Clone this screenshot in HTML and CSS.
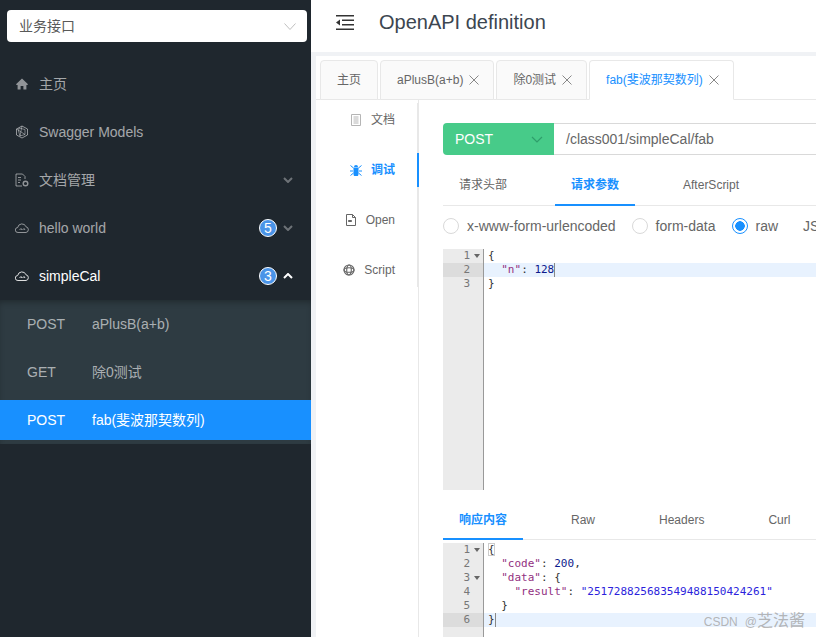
FILE: index.html
```html
<!DOCTYPE html>
<html lang="zh">
<head>
    <meta charset="UTF-8">
    <meta name="viewport" content="width=device-width, initial-scale=1.0">
    <title>OpenAPI definition</title>
    <link rel="stylesheet" href="styles.css">
</head>
<body>
    <aside class="sidebar">
        <div class="group-select">
            <span>业务接口</span>
            <svg class="select-arrow" viewBox="0 0 12 7"><path d="M.5.5 6 6.500 11.500.5" fill="none" stroke="#bfbfbf"/></svg>
        </div>
        <nav class="menu">
            <div class="menu-item">
                <svg class="menu-icon" viewBox="0 0 14 14"><path d="M7 1.500 1 7.300l.6.7h1v4.500h3V9h2.800v3.500h3V8h1l.6-.7z" fill="currentColor"/></svg>
                <span class="menu-label">主页</span>
            </div>
            <div class="menu-item">
                <svg class="menu-icon" viewBox="0 0 14 14" fill="none" stroke="currentColor"><path d="M7 1 12.500 4v6L7 13 1.500 10V4z"/><path d="M4 3 10 4.500v5L5 11 3.500 6z" stroke-width=".8"/><path d="M1.500 4 10 9.500M7 1 5 11" stroke-width=".8"/></svg>
                <span class="menu-label">Swagger Models</span>
            </div>
            <div class="menu-item">
                <svg class="menu-icon" viewBox="0 0 14 14" fill="none" stroke="currentColor"><path d="M7 13H1V1h6.500L10 3.500V6"/><path d="M3 4.500h3M3 7h3M3 9.500h2"/><circle cx="10.500" cy="10.500" r="2.300" stroke-width="1.400"/></svg>
                <span class="menu-label">文档管理</span>
                <svg class="chevron" viewBox="0 0 10 6"><path d="M1 1 5 5l4-4" fill="none" stroke="currentColor" stroke-width="2"/></svg>
            </div>
            <div class="menu-item">
                <svg class="menu-icon" viewBox="0 0 14 14" fill="none" stroke="currentColor"><path d="M4 11.500H3a2.500 2.500 0 0 1-.3-5A4.300 4.300 0 0 1 11 5.800a2.900 2.900 0 0 1 0 5.700z"/><path d="M4.500 9 6 7.500 7 9M7.500 9 9 7.500 10 9"/></svg>
                <span class="menu-label">hello world</span>
                <span class="badge">5</span>
                <svg class="chevron" viewBox="0 0 10 6"><path d="M1 1 5 5l4-4" fill="none" stroke="currentColor" stroke-width="2"/></svg>
            </div>
            <div class="menu-item open">
                <svg class="menu-icon" viewBox="0 0 14 14" fill="none" stroke="currentColor"><path d="M4 11.500H3a2.500 2.500 0 0 1-.3-5A4.300 4.300 0 0 1 11 5.800a2.900 2.900 0 0 1 0 5.700z"/><path d="M4.500 9 6 7.500 7 9M7.500 9 9 7.500 10 9"/></svg>
                <span class="menu-label">simpleCal</span>
                <span class="badge">3</span>
                <svg class="chevron" viewBox="0 0 10 6"><path d="M1 5 5 1l4 4" fill="none" stroke="currentColor" stroke-width="2"/></svg>
            </div>
            <div class="submenu">
                <div class="sub-item"><span class="method">POST</span><span>aPlusB(a+b)</span></div>
                <div class="sub-item"><span class="method">GET</span><span>除0测试</span></div>
                <div class="sub-item active"><span class="method">POST</span><span>fab(斐波那契数列)</span></div>
            </div>
        </nav>
    </aside>

    <div class="main">
        <header class="topbar">
            <svg class="fold-icon" viewBox="0 0 18 15" fill="#333"><path d="M0 0h18v1.500H0zM0 13.500h18V15H0zM6 4.500h12V6H6zM6 9h12v1.500H6zM4 4.500v6L0 7.500z"/></svg>
            <h1>OpenAPI definition</h1>
        </header>

        <div class="workspace">
            <div class="page-tabs">
                <div class="page-tab">主页</div>
                <div class="page-tab">aPlusB(a+b)<svg class="close" viewBox="0 0 10 10"><path d="M.5.500l9 9M9.500.500l-9 9" stroke="#888" fill="none"/></svg></div>
                <div class="page-tab">除0测试<svg class="close" viewBox="0 0 10 10"><path d="M.5.500l9 9M9.500.500l-9 9" stroke="#888" fill="none"/></svg></div>
                <div class="page-tab current">fab(斐波那契数列)<svg class="close" viewBox="0 0 10 10"><path d="M.5.500l9 9M9.500.500l-9 9" stroke="#888" fill="none"/></svg></div>
            </div>

            <div class="doc">
                <div class="side-nav">
                    <div class="side-list">
                        <div class="side-item">
                            <svg class="side-icon" viewBox="0 0 12 12" fill="none" stroke="#b5b5b5"><path d="M1.500.5h9v11h-9zM3.500 3h5M3.500 5h5M3.500 7h5M3.500 9h5"/></svg>
                            <span>文档</span>
                        </div>
                        <div class="side-item selected">
                            <svg class="side-icon" viewBox="0 0 12 12" fill="#1890ff"><path d="M3.500 3.500h5V10a2.500 2.500 0 0 1-5 0zM4 3a2 2 0 0 1 4 0z"/><path d="M.5 1.500l3 2.500M11.500 1.500l-3 2.500M0 7h3M12 7H9M.5 11.500l3-2.500M11.500 11.500l-3-2.500" stroke="#1890ff" fill="none"/></svg>
                            <span>调试</span>
                        </div>
                        <div class="side-item">
                            <svg class="side-icon" viewBox="0 0 12 12" fill="none" stroke="#666"><path d="M1.500.5h6l3 3v8h-9z"/><path d="M7.500.5v3h3"/><path d="M3.500 6.500h3v1h-3z" fill="#666"/></svg>
                            <span>Open</span>
                        </div>
                        <div class="side-item">
                            <svg class="side-icon" viewBox="0 0 12 12" fill="none" stroke="#666" stroke-width="1.100"><circle cx="6" cy="6" r="5"/><ellipse cx="6" cy="6" rx="5" ry="2.300"/><ellipse cx="6" cy="6" rx="2.300" ry="5"/></svg>
                            <span>Script</span>
                        </div>
                    </div>
                </div>

                <div class="debug">
                    <div class="url-bar">
                        <div class="method-select">
                            <span>POST</span>
                            <svg class="method-arrow" viewBox="0 0 12 7"><path d="M1 1 6 6l5-5" fill="none" stroke="#2f9e6b" stroke-width="1.200"/></svg>
                        </div>
                        <div class="url-input">/class001/simpleCal/fab</div>
                    </div>

                    <div class="tabs">
                        <div class="tab">请求头部</div>
                        <div class="tab on">请求参数</div>
                        <div class="tab">AfterScript</div>
                    </div>

                    <div class="radios">
                        <label class="radio"><i></i>x-www-form-urlencoded</label>
                        <label class="radio"><i></i>form-data</label>
                        <label class="radio checked"><i></i>raw</label>
                        <label class="radio plain">JSON</label>
                    </div>

                    <div class="editor request">
                        <div class="gutter">
                            <div class="num fold">1</div>
                            <div class="num now">2</div>
                            <div class="num">3</div>
                        </div>
                        <div class="code">
                            <div class="line">{</div>
                            <div class="line now">  <span class="key">"n"</span>: <span class="val">128</span><span class="cursor"></span></div>
                            <div class="line">}</div>
                        </div>
                    </div>

                    <div class="tabs response-tabs">
                        <div class="tab on">响应内容</div>
                        <div class="tab">Raw</div>
                        <div class="tab">Headers</div>
                        <div class="tab">Curl</div>
                    </div>

                    <div class="editor response">
                        <div class="gutter">
                            <div class="num fold">1</div>
                            <div class="num">2</div>
                            <div class="num fold">3</div>
                            <div class="num">4</div>
                            <div class="num">5</div>
                            <div class="num now">6</div>
                        </div>
                        <div class="code">
                            <div class="line"><span class="match">{</span></div>
                            <div class="line">  <span class="key">"code"</span>: <span class="val">200</span>,</div>
                            <div class="line">  <span class="key">"data"</span>: {</div>
                            <div class="line">    <span class="key">"result"</span>: <span class="str">"251728825683549488150424261"</span></div>
                            <div class="line">  }</div>
                            <div class="line now">}<span class="cursor"></span></div>
                        </div>
                    </div>
                </div>
            </div>
        </div>
    </div>

    <div class="watermark">CSDN<span class="watermark-at">@</span><span class="watermark-name">芝法酱</span></div>
</body>
</html>
```
FILE: styles.css
```css
* {
    box-sizing: border-box;
}
html, body {
    height: 100%;
}
body {
    margin: 0;
    display: flex;
    overflow: hidden;
    position: relative;
    font-family: "Liberation Sans", "Noto Sans CJK SC", sans-serif;
    font-size: 14px;
    line-height: 20px;
    color: #666;
    background: #fff;
}

/* sidebar */
.sidebar {
    width: 311px;
    flex: none;
    background: #1f272e;
    color: rgba(255, 255, 255, 0.6);
}
.group-select {
    height: 32px;
    margin: 10px 4px 18px 7px;
    padding: 0 11px 0 12px;
    display: flex;
    align-items: center;
    justify-content: space-between;
    background: #fff;
    border-radius: 4px;
    color: #595959;
}
.select-arrow {
    width: 12px;
    height: 7px;
}
.menu-item {
    height: 48px;
    padding: 0 18px 0 15px;
    display: flex;
    align-items: center;
}
.menu-item.open {
    color: #fff;
}
.menu-icon {
    width: 14px;
    height: 14px;
    margin-right: 10px;
    flex: none;
    opacity: 0.85;
}
.menu-label {
    flex: 1;
}
.badge {
    width: 18px;
    height: 18px;
    margin-right: 6px;
    border: 1px solid #fff;
    border-radius: 50%;
    background: #4a94e8;
    color: #fff;
    font-size: 14px;
    line-height: 16px;
    text-align: center;
}
.chevron {
    width: 10px;
    height: 6px;
    color: rgba(255, 255, 255, 0.35);
}
.open .chevron {
    color: #fff;
}
.submenu {
    padding: 4px 0;
    background: #2e3b42;
    box-shadow: inset 0 4px 6px -2px rgba(0, 0, 0, 0.3);
}
.sub-item {
    height: 40px;
    margin-bottom: 8px;
    padding-left: 27px;
    display: flex;
    align-items: center;
}
.sub-item:last-child {
    margin-bottom: 0;
}
.sub-item.active {
    background: #1890ff;
    color: #fff;
}
.method {
    width: 65px;
}

/* top bar */
.main {
    flex: 1;
    min-width: 0;
    display: flex;
    flex-direction: column;
}
.topbar {
    height: 52px;
    flex: none;
    padding: 0 0 8px 25px;
    display: flex;
    align-items: center;
    background: #fff;
}
.fold-icon {
    width: 18px;
    height: 15px;
    margin-right: 25px;
}
.topbar h1 {
    margin: 0;
    font-size: 20px;
    font-weight: 400;
    color: #3c4650;
}
.workspace {
    flex: 1;
    min-height: 0;
    padding: 4px 0 0 5px;
    background: #f0f2f5;
}

/* open page tabs */
.page-tabs {
    height: 44px;
    padding: 4px 0 0 4px;
    display: flex;
    gap: 2px;
    background: #fff;
    border-bottom: 1px solid #e8e8e8;
}
.page-tab {
    height: 40px;
    padding: 0 14px 0 16px;
    display: flex;
    align-items: center;
    font-size: 12px;
    background: #fafafa;
    border: 1px solid #e8e8e8;
    border-radius: 4px 4px 0 0;
    white-space: nowrap;
}
.page-tab:first-child {
    padding: 0 16px;
}
.page-tab.current {
    background: #fff;
    border-bottom-color: #fff;
    color: #1890ff;
}
.close {
    width: 10px;
    height: 10px;
    margin-left: 6px;
}
.doc {
    height: calc(100% - 44px);
    display: flex;
    background: #fff;
}

/* doc side nav */
.side-nav {
    width: 103px;
    flex: none;
    height: 100%;
    padding-top: 3px;
    border-right: 1px solid #e8e8e8;
}
.side-list {
    margin-right: -1px;
    border-right: 2px solid #e8e8e8;
}
.side-item {
    height: 34px;
    margin-bottom: 16px;
    padding-right: 22px;
    display: flex;
    align-items: center;
    justify-content: flex-end;
    gap: 9px;
    font-size: 12px;
}
.side-item:last-child {
    margin-bottom: 0;
}
.side-item.selected {
    margin-right: -2px;
    padding-right: 22px;
    color: #1890ff;
    font-weight: 700;
    border-right: 2px solid #1890ff;
}
.side-icon {
    width: 12px;
    height: 12px;
}

/* debug panel */
.debug {
    flex: 1;
    min-width: 0;
    padding: 23px 0 0 24px;
    overflow: hidden;
}
.url-bar {
    display: flex;
    height: 32px;
    width: 460px;
}
.method-select {
    width: 111px;
    flex: none;
    padding: 0 11px 0 12px;
    display: flex;
    align-items: center;
    justify-content: space-between;
    background: #47cb89;
    color: #fff;
    border-radius: 4px 0 0 4px;
}
.method-arrow {
    width: 12px;
    height: 7px;
}
.url-input {
    flex: 1;
    padding-left: 12px;
    line-height: 30px;
    border: 1px solid #d9d9d9;
    border-left: 0;
}
.tabs {
    height: 41px;
    width: 460px;
    margin-top: 10px;
    display: flex;
    gap: 32px;
    border-bottom: 1px solid #e8e8e8;
}
.tab {
    flex: none;
    padding: 0 16px;
    line-height: 41px;
    font-size: 12px;
    white-space: nowrap;
}
.tab.on {
    color: #1890ff;
    font-weight: 700;
    border-bottom: 2px solid #1890ff;
    height: 41px;
}
.response-tabs {
    height: 40px;
}
.response-tabs .tab {
    line-height: 40px;
}
.response-tabs .tab.on {
    height: 40px;
}
.radios {
    height: 43px;
    padding-bottom: 4px;
    display: flex;
    align-items: center;
    gap: 16px;
    white-space: nowrap;
}
.radio {
    display: flex;
    align-items: center;
    gap: 8px;
}
.radio i {
    width: 16px;
    height: 16px;
    border: 1px solid #d9d9d9;
    border-radius: 50%;
}
.radio.checked i {
    border-color: #1890ff;
    background: radial-gradient(circle, #1890ff 0 4.5px, #fff 5px);
}
.radio.plain {
    margin-left: 9px;
}

/* code editors */
.editor {
    display: flex;
    width: 460px;
    font-family: "DejaVu Sans Mono", monospace;
    font-size: 11px;
    line-height: 14px;
    color: #333;
}
.request {
    height: 241px;
}
.response {
    height: 97px;
    margin-top: 3px;
}
.gutter {
    width: 41px;
    flex: none;
    background: #ebebeb;
    border-right: 1px solid #999;
    color: #777;
}
.num {
    padding-right: 13px;
    text-align: right;
    position: relative;
}
.num.now {
    background: #dcdcdc;
}
.num.fold::after {
    content: "";
    position: absolute;
    right: 3px;
    top: 5px;
    border: 3px solid transparent;
    border-top: 4px solid #666;
    border-bottom: 0;
}
.code {
    flex: 1;
}
.line {
    height: 14px;
    padding-left: 4px;
    white-space: pre;
}
.line.now {
    background: #e8f2fe;
}
.key {
    color: #92307f;
}
.val {
    color: #0d1a8c;
}
.str {
    color: #2c1fdc;
}
.cursor {
    display: inline-block;
    width: 1px;
    height: 14px;
    vertical-align: top;
    background: #888;
}
.match {
    outline: 1px solid #ccc;
    outline-offset: -1px;
}
.watermark {
    position: absolute;
    right: 11px;
    bottom: 5px;
    font-size: 12px;
    color: rgba(165, 165, 165, 0.8);
    white-space: nowrap;
}
.watermark-at {
    margin-left: 7px;
}
.watermark-name {
    font-size: 16px;
}
```
